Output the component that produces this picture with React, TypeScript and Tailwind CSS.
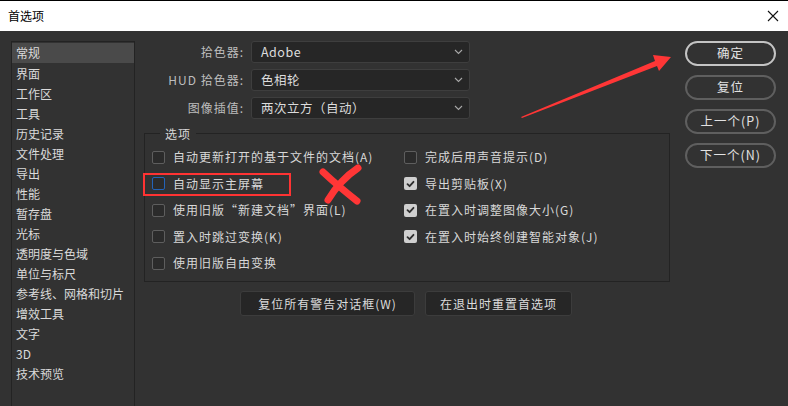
import React from "react";

const font = { fontFamily: '"Noto Sans CJK SC", "Noto Sans", sans-serif' };

const navItems = [
  "常规", "界面", "工作区", "工具", "历史记录", "文件处理", "导出", "性能", "暂存盘",
  "光标", "透明度与色域", "单位与标尺", "参考线、网格和切片", "增效工具", "文字", "3D", "技术预览",
];

const leftOpts: { label: string; checked?: boolean; focus?: boolean }[] = [
  { label: "自动更新打开的基于文件的文档(A)" },
  { label: "自动显示主屏幕", focus: true },
  { label: "使用旧版“新建文档”界面(L)" },
  { label: "置入时跳过变换(K)" },
  { label: "使用旧版自由变换" },
];

const rightOpts: { label: string; checked?: boolean; focus?: boolean }[] = [
  { label: "完成后用声音提示(D)" },
  { label: "导出剪贴板(X)", checked: true },
  { label: "在置入时调整图像大小(G)", checked: true },
  { label: "在置入时始终创建智能对象(J)", checked: true },
];

function Checkbox({ checked, focus }: { checked?: boolean; focus?: boolean }) {
  if (checked) {
    return (
      <span className="w-[13px] h-[13px] rounded-[2px] bg-[#cfcfcf] flex items-center justify-center shrink-0">
        <svg width="9" height="8" viewBox="0 0 9 8">
          <path d="M1.5 4.2 L3.6 6.2 L7.5 1.8" fill="none" stroke="#2e2e2e" strokeWidth="1.8" strokeLinecap="round" strokeLinejoin="round" />
        </svg>
      </span>
    );
  }
  return (
    <span
      className={
        "w-[13px] h-[13px] rounded-[2px] border bg-[#2b2b2b] shrink-0 " +
        (focus ? "border-[#2463b8]" : "border-[#5e5e5e]")
      }
    />
  );
}

function OptRow({ label, checked, focus }: { label: string; checked?: boolean; focus?: boolean }) {
  return (
    <div className="h-[26.5px] flex items-center gap-[8px]">
      <Checkbox checked={checked} focus={focus} />
      <span className="text-[12px] tracking-[1px] text-[#d8d8d8] whitespace-nowrap">{label}</span>
    </div>
  );
}

function Select({ label, value }: { label: string; value: string }) {
  return (
    <div className="flex items-center h-[22px]">
      <span className="w-[102px] text-right pr-[4px] text-[12px] tracking-[1px] text-[#bdbdbd] whitespace-nowrap">{label}</span>
      <div className="ml-[3px] w-[219px] h-[22px] rounded-[3px] border border-[#3e3e3e] bg-[#262626] flex items-center pl-[9px] pr-[6px]">
        <span className="text-[12.5px] tracking-[0.5px] text-[#dcdcdc] flex-1">{value}</span>
        <svg width="9" height="6" viewBox="0 0 9 6">
          <path d="M1 1 L4.5 4.5 L8 1" fill="none" stroke="#a8a8a8" strokeWidth="1.1" />
        </svg>
      </div>
    </div>
  );
}

function SideButton({ text, primary }: { text: string; primary?: boolean }) {
  return (
    <div
      className={
        "w-[91px] h-[25px] rounded-full flex items-center justify-center text-[12.5px] tracking-[1px] text-[#e2e2e2] " +
        (primary ? "border-2 border-[#c4c4c4]" : "border-2 border-[#5f5f5f]")
      }
    >
      {text}
    </div>
  );
}

export default function App() {
  return (
    <div className="relative w-[788px] h-[406px] flex flex-col overflow-hidden bg-[#323232]" style={font}>
      <div className="h-[31px] bg-white border-t border-black flex items-center justify-between pl-[8px] pr-[9px] shrink-0">
        <span className="text-[12px] text-black">首选项</span>
        <svg width="12" height="12" viewBox="0 0 12 12">
          <path d="M1 1 L11 11 M11 1 L1 11" stroke="#111" strokeWidth="1.1" />
        </svg>
      </div>

      <div className="flex-1 flex pt-[10px] pl-[11px]">
        <div className="w-[124px] self-stretch border border-[#232323] border-b-0 pt-[1px]">
          {navItems.map((item, i) => (
            <div
              key={item}
              className={
                "h-[20px] leading-[19px] pl-[4px] text-[12px] text-[#dadada] whitespace-nowrap " +
                (i === 0 ? "bg-[#4a4a4a] h-[19px] mb-[1px]" : "")
              }
            >
              {item}
            </div>
          ))}
        </div>

        <div className="ml-[9px] w-[526px] flex flex-col">
          <div className="flex flex-col gap-[6px] pl-[2px]">
            <Select label="拾色器:" value="Adobe" />
            <Select label="HUD 拾色器:" value="色相轮" />
            <Select label="图像插值:" value="两次立方（自动）" />
          </div>

          <div className="relative mt-[14px] h-[149px] border border-[#232323] pt-[10px] pl-[7px] flex">
            <span className="absolute -top-[9px] left-[15px] px-[5px] bg-[#323232] text-[12px] tracking-[1px] text-[#d8d8d8]">
              选项
            </span>
            <div className="w-[252px] flex flex-col">
              {leftOpts.map((o) => (
                <OptRow key={o.label} {...o} />
              ))}
            </div>
            <div className="flex flex-col">
              {rightOpts.map((o) => (
                <OptRow key={o.label} {...o} />
              ))}
            </div>
          </div>

          <div className="mt-[9px] flex justify-center gap-[10px] pr-[2px]">
            <div className="w-[175px] h-[25px] rounded-[3px] border border-[#3c3c3c] bg-[#262626] flex items-center justify-center text-[12px] tracking-[1px] text-[#dcdcdc]">
              复位所有警告对话框(W)
            </div>
            <div className="w-[147px] h-[25px] rounded-[3px] border border-[#3c3c3c] bg-[#262626] flex items-center justify-center text-[12px] tracking-[1px] text-[#dcdcdc]">
              在退出时重置首选项
            </div>
          </div>
        </div>

        <div className="ml-[15px] flex flex-col gap-[9px]">
          <SideButton text="确定" primary />
          <SideButton text="复位" />
          <SideButton text="上一个(P)" />
          <SideButton text="下一个(N)" />
        </div>
      </div>

      {/* annotations */}
      <div className="absolute left-[143px] top-[173px] w-[148px] h-[23px] border-2 border-[#ff3333]" />
      <svg className="absolute left-0 top-0 pointer-events-none" width="788" height="406" viewBox="0 0 788 406">
        <path d="M323 172 Q338 186 357 201" fill="none" stroke="#ff3636" strokeWidth="7" strokeLinecap="round" />
        <path d="M358 168 Q340 180 328 200" fill="none" stroke="#ff3636" strokeWidth="7" strokeLinecap="round" />
        <polygon points="521,117 655,61 653,55 671,57 659,71 657,66 522,118" fill="#ff3636" />
      </svg>
    </div>
  );
}
